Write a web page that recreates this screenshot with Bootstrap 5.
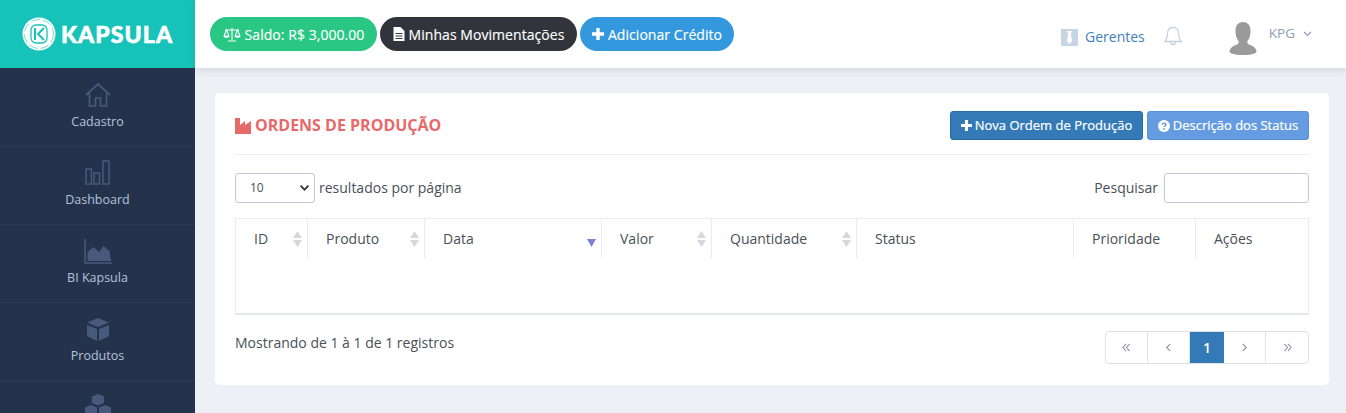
<!DOCTYPE html>
<html lang="pt-BR">
<head>
  <meta charset="UTF-8">
  <meta name="viewport" content="width=device-width, initial-scale=1.0">
  <title>Ordens de Produção - Kapsula</title>
  <link href="https://cdn.jsdelivr.net/npm/bootstrap@5.3.3/dist/css/bootstrap.min.css" rel="stylesheet">
  <style>
    html, body { height: 100%; overflow: hidden; }
    body { font-family: "Open Sans", "Liberation Sans", sans-serif; font-size: 14px; color: #495057; background: #edf0f5; }
    svg { flex-shrink: 0; }
    .app-shell { height: 413px; }
    .side-col { width: 195px; flex: 0 0 195px; background: #25324b; overflow: hidden; }
    .brand-box { height: 68px; flex: 0 0 68px; background: #17c3b9; color: #fff; padding-left: 22px; }
    .brand-text { font-family: "Lato", "Liberation Sans", sans-serif; font-weight: 900; font-size: 23px; letter-spacing: 1.1px; line-height: 1; margin-left: 5px; -webkit-text-stroke: .6px #fff; }
    .side-link { height: 78px; flex: 0 0 78px; color: #b4c2de; font-size: 12.5px; text-decoration: none; box-shadow: 0 1px 0 #2c3a56; padding-top: 13px; }
    .side-link svg { width: 28px; height: 28px; margin-bottom: 4px; display: block; }
    .side-link span { line-height: 17px; }
    .top-bar { height: 68px; flex: 0 0 68px; background: #fff; box-shadow: 0 2px 8px rgba(60, 70, 90, .16); padding: 17px 0 0 15px; position: relative; z-index: 2; }
    .pill-row { gap: 3px; }
    .pill-btn { height: 34px; border-radius: 17px; color: #fff; font-size: 14px; letter-spacing: .05px; -webkit-text-stroke: .15px #fff; padding: 0; border: 0; gap: 4px; white-space: nowrap; }
    .pill-green { background: #29c684; width: 167px; }
    .pill-dark { background: #31343b; width: 197px; }
    .pill-blue { background: #3498de; width: 154px; }
    .top-right { height: 34px; padding-right: 34px; color: #337ab7; }
    .tie-icon { margin: 6px 7px 0 0; }
    .gerentes-link { font-size: 14px; margin-right: 19px; margin-top: 5px; color: #3f7fbd; }
    .bell-icon { margin-top: 4px; }
    .avatar-icon { margin: 9px 0 0 47px; }
    .user-name { font-size: 13.5px; color: #8b9cb5; margin-left: 12px; margin-top: -1px; }
    .caret-icon { margin: -1px 0 0 8px; }
    .panel-box { background: #fff; border-radius: 5px; margin: 25px 17px 0 20px; height: 292px; padding: 0 20px; }
    .panel-head { height: 62px; padding-top: 4px; border-bottom: 1px solid #e9ecef; }
    .panel-title { color: #e66a6a; font-size: 16px; font-weight: 700; margin: 0; gap: 4px; }
    .act-row { gap: 4px; }
    .act-btn { height: 29px; font-size: 13px; -webkit-text-stroke: .2px #fff; color: #fff; border-radius: 3px; padding: 0; gap: 3px; }
    .act-new { width: 193px; background: #337ab7; border: 1px solid #2a6aa3; }
    .act-help { width: 162px; background: #659be0; border: 1px solid #5a90d8; }
    .len-select { width: 80px; height: 30px; font-size: 12px; padding: 0 24px 0 14px; border-color: #c2cad8; border-radius: 3px; color: #495057; background-position: right 4px center; background-size: 11px 8px; background-image: url("data:image/svg+xml,%3csvg xmlns='http://www.w3.org/2000/svg' viewBox='0 0 14 10'%3e%3cpath fill='none' stroke='%23343a40' stroke-width='2.4' d='m2 2 5 5 5-5'/%3e%3c/svg%3e"); }
    .search-input { width: 145px; height: 30px; border-color: #c2cad8; border-radius: 3px; }
    .search-box { gap: 6px; }
    .tools-text { margin-bottom: 2px; }
    .tools-row { margin-top: 18px; height: 30px; font-size: 14px; }
    .grid-wrap { margin-top: 15px; border: 1px solid #e9ecef; border-bottom: 2px solid #e3e6ec; height: 97px; }
    .grid-table { table-layout: fixed; width: 100%; margin: 0; }
    .grid-table th { position: relative; height: 39px; padding: 0 0 0 18.5px; font-weight: 400; font-size: 14px; color: #495057; border-bottom: 0; border-right: 1px solid #e9edf3; vertical-align: middle; background: transparent; }
    .grid-table th:first-child { padding-left: 18px; }
    .grid-table th:last-child { border-right: 0; }
    .sort-mark { position: absolute; right: 5px; top: 12px; width: 9px; height: 16px; }
    .sort-down { position: absolute; right: 5px; top: 20px; width: 9px; height: 8px; }
    .foot-row { margin-top: 16px; }
    .foot-text { font-size: 14px; margin-top: 1px; }
    .pager-box { height: 33px; border: 1px solid #dfe1e5; border-radius: 4px; overflow: hidden; width: 204px; }
    .pager-box a { display: flex; align-items: center; justify-content: center; text-decoration: none; color: #8a94a3; font-size: 14px; height: 100%; border-right: 1px solid #dfe1e5; }
    .pager-box a:last-child { border-right: 0; }
    .pager-box svg { width: 9px; height: 9px; }
    .pager-box .pg-wide { width: 42px; }
    .pager-box .pg-on { width: 34px; background: #337ab7; color: #fff; font-weight: 600; border-right: 0; margin-top: -1px; height: 33px; }
  </style>
</head>
<body>
<div class="app-shell d-flex">
  <aside class="side-col d-flex flex-column">
    <div class="brand-box d-flex align-items-center">
      <svg width="34" height="34" viewBox="0 0 34 34">
        <circle cx="17" cy="17" r="16.500" fill="#fff"/>
        <circle cx="17" cy="17" r="14.500" fill="none" stroke="#17c3b9" stroke-width=".6" stroke-dasharray="9 3"/>
        <rect x="9" y="8" width="16" height="18" rx="5" fill="#fff" stroke="#17c3b9" stroke-width="1.300"/>
        <path d="M13 11v12M22 11l-6 6 6 6" fill="none" stroke="#17c3b9" stroke-width="2"/>
      </svg>
      <span class="brand-text">KAPSULA</span>
    </div>
    <a class="side-link d-flex flex-column align-items-center" href="#">
      <svg viewBox="0 0 28 28" fill="none" stroke="#47597c" stroke-width="1.700"><path d="M2 14 14 3l12 11M5.500 12v13h6v-8h5v8h6V12"/></svg>
      <span>Cadastro</span>
    </a>
    <a class="side-link d-flex flex-column align-items-center" href="#">
      <svg viewBox="0 0 28 28" fill="none" stroke="#47597c" stroke-width="1.500"><rect x="2" y="10" width="5.500" height="15"/><rect x="10" y="14" width="5.500" height="11"/><rect x="19" y="2" width="6" height="23"/></svg>
      <span>Dashboard</span>
    </a>
    <a class="side-link d-flex flex-column align-items-center" href="#">
      <svg viewBox="0 0 28 28"><path d="M1 2v24h27" fill="none" stroke="#47597c" stroke-width="1.500"/><path d="M3.500 24v-9l6-5 5.500 5 4.500-6 6 5 1.500 10z" fill="#47597c"/></svg>
      <span>BI Kapsula</span>
    </a>
    <a class="side-link d-flex flex-column align-items-center" href="#">
      <svg viewBox="0 0 28 28"><path d="M14 3 3 7.500l11 4.500 11-4.500zM3 10v11l10 5V14zm22 0-10 4v12l10-5z" fill="#47597c"/></svg>
      <span>Produtos</span>
    </a>
    <a class="side-link d-flex flex-column align-items-center" href="#">
      <svg viewBox="0 0 28 28"><path d="m14 1-6 2.500V10l6 2.500 6-2.500V3.500zM7 12l-6 2.500V21l6 2.500 6-2.500v-6.500zm14 0-6 2.500V21l6 2.500 6-2.500v-6.500z" fill="#47597c"/></svg>
    </a>
  </aside>

  <div class="flex-grow-1 d-flex flex-column">
    <header class="top-bar d-flex">
      <div class="pill-row d-flex align-items-start">
        <button class="pill-btn pill-green d-flex align-items-center justify-content-center" type="button">
          <svg width="18" height="15" viewBox="0 0 18 15" fill="none" stroke="#fff" stroke-width="1.100"><path d="M9 1v12M5 14h8M2 3h14M3.500 3 1 9c.5 1.500 4.500 1.500 5 0zM14.500 3 12 9c.5 1.500 4.500 1.500 5 0zM1 9h5M12 9h5"/></svg>
          <span>Saldo: R$ 3,000.00</span>
        </button>
        <button class="pill-btn pill-dark d-flex align-items-center justify-content-center" type="button">
          <svg width="12" height="14" viewBox="0 0 11 14"><path d="M0 0h7l4 4v10H0zM2 6v1h7V6zm0 2.500v1h7v-1zM2 11v1h7v-1z" fill="#fff" fill-rule="evenodd"/></svg>
          <span>Minhas Movimentações</span>
        </button>
        <button class="pill-btn pill-blue d-flex align-items-center justify-content-center" type="button">
          <svg width="12" height="12" viewBox="0 0 12 12"><path d="M4.300 0h3.400v4.300H12v3.400H7.700V12H4.300V7.700H0V4.300h4.300z" fill="#fff"/></svg>
          <span>Adicionar Crédito</span>
        </button>
      </div>
      <div class="top-right ms-auto d-flex align-items-center align-self-start">
        <svg class="tie-icon" width="17" height="17" viewBox="0 0 17 17"><rect width="17" height="17" fill="#c6d5e4"/><path d="M6 2h5L9.800 5l1.400 7-2.700 3-2.700-3 1.400-7z" fill="#fff"/></svg>
        <span class="gerentes-link">Gerentes</span>
        <svg class="bell-icon" width="18" height="21" viewBox="0 0 18 21" fill="none" stroke="#c3d1e3" stroke-width="1.300"><path d="M9 1.500c-3.500 0-5.500 2.500-5.500 6 0 4-1 6-2.500 8h16c-1.500-2-2.500-4-2.500-8 0-3.500-2-6-5.500-6zM6.500 15.500c0 4 5 4 5 0"/></svg>
        <svg class="avatar-icon" width="28" height="33" viewBox="0 0 28 33"><path d="M14 0c5 0 7.500 3.500 7.500 9 0 4-.8 7-3 10-.8 1.500.2 3 2.500 4 3 1 5.500 2.500 6.500 6 .5 2-4 4-13.500 4S0 31 .5 29c1-3.500 3.500-5 6.500-6 2.300-1 3.300-2.500 2.500-4-2.200-3-3-6-3-10 0-5.500 2.500-9 7.500-9z" fill="#9a9a9a"/></svg>
        <span class="user-name">KPG</span>
        <svg class="caret-icon" width="9" height="6" viewBox="0 0 9 6" fill="none" stroke="#8b9cb5" stroke-width="1.200"><path d="m1 1 3.500 3.500L8 1"/></svg>
      </div>
    </header>

    <main class="panel-box">
      <div class="panel-head d-flex align-items-center justify-content-between">
        <h1 class="panel-title d-flex align-items-center">
          <svg width="16" height="16" viewBox="0 0 16 16"><path d="M0 0h5v7L10 3v4l6-4v13H0z" fill="#e66a6a"/></svg>
          ORDENS DE PRODUÇÃO
        </h1>
        <div class="act-row d-flex">
          <button class="btn act-btn act-new d-flex align-items-center justify-content-center" type="button">
            <svg width="11" height="11" viewBox="0 0 12 12"><path d="M4.300 0h3.400v4.300H12v3.400H7.700V12H4.300V7.700H0V4.300h4.300z" fill="#fff"/></svg>
            Nova Ordem de Produção
          </button>
          <button class="btn act-btn act-help d-flex align-items-center justify-content-center" type="button">
            <svg width="12" height="12" viewBox="0 0 12 12"><circle cx="6" cy="6" r="6" fill="#fff"/><path d="M4.200 4.700C4.200 2.600 7.900 2.600 7.900 4.500c0 1.400-1.800 1.300-1.800 2.600" fill="none" stroke="#659be0" stroke-width="1.400"/><rect x="5.300" y="8.200" width="1.600" height="1.600" fill="#659be0"/></svg>
            Descrição dos Status
          </button>
        </div>
      </div>

      <div class="tools-row d-flex justify-content-between align-items-center">
        <div class="d-flex align-items-center gap-1">
          <select class="form-select len-select"><option>10</option></select>
          <span class="tools-text">resultados por página</span>
        </div>
        <div class="search-box d-flex align-items-center">
          <label class="tools-text" for="busca">Pesquisar</label>
          <input class="form-control search-input" id="busca" type="text">
        </div>
      </div>

      <div class="grid-wrap">
        <table class="table grid-table">
          <colgroup>
            <col style="width:71px"><col style="width:117px"><col style="width:177px"><col style="width:110px"><col style="width:145px"><col style="width:217px"><col style="width:122px"><col>
          </colgroup>
          <thead>
            <tr>
              <th>ID<svg class="sort-mark" viewBox="0 0 9 16"><path d="M4.500 0 9 7H0zM0 9h9l-4.500 7z" fill="#d5d8dc"/></svg></th>
              <th>Produto<svg class="sort-mark" viewBox="0 0 9 16"><path d="M4.500 0 9 7H0zM0 9h9l-4.500 7z" fill="#d5d8dc"/></svg></th>
              <th>Data<svg class="sort-down" viewBox="0 0 9 8"><path d="M0 0h9L4.500 8z" fill="#7b82d6"/></svg></th>
              <th>Valor<svg class="sort-mark" viewBox="0 0 9 16"><path d="M4.500 0 9 7H0zM0 9h9l-4.500 7z" fill="#d5d8dc"/></svg></th>
              <th>Quantidade<svg class="sort-mark" viewBox="0 0 9 16"><path d="M4.500 0 9 7H0zM0 9h9l-4.500 7z" fill="#d5d8dc"/></svg></th>
              <th>Status</th>
              <th>Prioridade</th>
              <th>Ações</th>
            </tr>
          </thead>
        </table>
      </div>

      <div class="foot-row d-flex justify-content-between align-items-start">
        <div class="foot-text">Mostrando de 1 à 1 de 1 registros</div>
        <nav class="pager-box d-flex" aria-label="Paginação">
          <a class="pg-wide" href="#"><svg viewBox="0 0 10 10" fill="none" stroke="#8a94a3" stroke-width="1.200"><path d="M4.500 1 1 5l3.500 4M8.500 1 5 5l3.500 4"/></svg></a>
          <a class="pg-wide" href="#"><svg viewBox="0 0 10 10" fill="none" stroke="#8a94a3" stroke-width="1.200"><path d="M7 1 3 5l4 4"/></svg></a>
          <a class="pg-on" href="#">1</a>
          <a class="pg-wide" href="#"><svg viewBox="0 0 10 10" fill="none" stroke="#8a94a3" stroke-width="1.200"><path d="m3 1 4 4-4 4"/></svg></a>
          <a class="flex-grow-1" href="#"><svg viewBox="0 0 10 10" fill="none" stroke="#8a94a3" stroke-width="1.200"><path d="m1.500 1 3.500 4-3.500 4M5.500 1 9 5 5.500 9"/></svg></a>
        </nav>
      </div>
    </main>
  </div>
</div>
<script src="https://cdn.jsdelivr.net/npm/bootstrap@5.3.3/dist/js/bootstrap.bundle.min.js"></script>
</body>
</html>
